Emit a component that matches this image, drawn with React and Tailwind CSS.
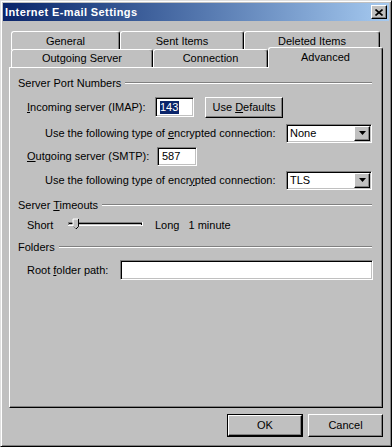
const raised = 'border border-t-white border-l-white border-r-black border-b-black shadow-[inset_-1px_-1px_#808080]'
const sunken = 'border border-t-[#808080] border-l-[#808080] border-r-white border-b-white shadow-[inset_1px_1px_#000,inset_-1px_-1px_#c0c0c0]'
const tab = 'flex items-center justify-center border-l border-t border-r border-l-white border-t-white border-r-black rounded-t-[3px] shadow-[inset_-1px_0_#808080]'

function GroupHeader({ children, className = '' }) {
  return (
    <div className={`flex items-center h-[14px] pl-[8px] pr-[10px] ${className}`}>
      <span className="leading-[13px] whitespace-nowrap">{children}</span>
      <div className="flex-1 ml-[4px] h-[2px] border-t border-t-[#808080] border-b border-b-white" />
    </div>
  )
}

function Select({ value }) {
  return (
    <div className={`ml-auto w-[86px] h-[19px] bg-white flex items-center ${sunken}`}>
      <span className="flex-1 pl-[3px] leading-[13px]">{value}</span>
      <div className={`w-[16px] h-[15px] mr-[1px] bg-[#c0c0c0] flex items-center justify-center ${raised}`}>
        <svg width="7" height="4" viewBox="0 0 7 4">
          <path d="M0 0h7L3.5 4z" fill="#000" />
        </svg>
      </div>
    </div>
  )
}

export default function App() {
  return (
    <div className="w-[392px] h-[447px] bg-[#c0c0c0] border border-t-[#dfdfdf] border-l-[#dfdfdf] border-r-black border-b-black shadow-[inset_1px_1px_#fff,inset_-1px_-1px_#808080] p-[2px] flex flex-col font-['Liberation_Sans',Arial,sans-serif] text-[11px] text-black select-none">
      {/* title bar */}
      <div className="h-[18px] flex items-center bg-gradient-to-r from-[#0a246a] to-[#a6caf0] pl-[2px] pr-[2px]">
        <span className="flex-1 text-white font-bold tracking-[0.4px] leading-[13px]">Internet E-mail Settings</span>
        <div className={`w-[16px] h-[14px] bg-[#c0c0c0] flex items-center justify-center ${raised}`}>
          <svg width="8" height="7" viewBox="0 0 8 7">
            <path d="M0.5 0.5l7 6M7.5 0.5l-7 6" stroke="#000" strokeWidth="1.6" />
          </svg>
        </div>
      </div>

      {/* tabs */}
      <div className="mt-[10px] ml-[8px] flex h-[18px]">
        <div className={`w-[109px] h-[19px] ${tab}`}>General</div>
        <div className={`w-[124px] h-[19px] ${tab}`}>Sent Items</div>
        <div className={`w-[136px] h-[19px] ${tab}`}>Deleted Items</div>
      </div>
      <div className="ml-[8px] flex items-end h-[18px]">
        <div className={`w-[142px] h-[18px] bg-[#c0c0c0] ${tab}`}>Outgoing Server</div>
        <div className={`w-[115px] h-[18px] bg-[#c0c0c0] ${tab}`}>Connection</div>
        <div className={`relative z-10 w-[115px] h-[21px] -mb-[1px] bg-[#c0c0c0] pb-[2px] ${tab}`}>Advanced</div>
      </div>

      {/* panel */}
      <div className="mx-[6px] h-[341px] flex flex-col border border-t-white border-l-white border-r-black border-b-black shadow-[inset_-1px_-1px_#808080]">
        <GroupHeader className="mt-[8px]">Server Port Numbers</GroupHeader>

        <div className="mt-[6px] h-[22px] flex items-center pl-[17px]">
          <span className="w-[128px] leading-[13px]"><span className="underline">I</span>ncoming server (IMAP):</span>
          <div className={`w-[39px] h-[20px] bg-white flex items-center pl-[4px] ${sunken}`}>
            <span className="bg-[#0a246a] text-white leading-[13px] pr-[1px]">143</span>
          </div>
          <div className={`ml-[11px] w-[78px] h-[21px] flex items-center justify-center ${raised}`}>
            <span className="leading-[13px]">Use <span className="underline">D</span>efaults</span>
          </div>
        </div>

        <div className="mt-[5px] h-[20px] flex items-center pl-[35px] pr-[10px]">
          <span className="leading-[13px]">Use the following type of <span className="underline">e</span>ncrypted connection:</span>
          <Select value="None" />
        </div>

        <div className="mt-[3px] h-[20px] flex items-center pl-[17px]">
          <span className="w-[130px] leading-[13px]"><span className="underline">O</span>utgoing server (SMTP):</span>
          <div className={`w-[40px] h-[19px] bg-white flex items-center pl-[4px] ${sunken}`}>
            <span className="leading-[13px]">587</span>
          </div>
        </div>

        <div className="mt-[4px] h-[20px] flex items-center pl-[35px] pr-[10px]">
          <span className="leading-[13px]">Use the following type of encr<span className="underline">y</span>pted connection:</span>
          <Select value="TLS" />
        </div>

        <GroupHeader className="mt-[8px]">Server <span className="underline">T</span>imeouts</GroupHeader>

        <div className="mt-[4px] h-[18px] flex items-center pl-[17px]">
          <span className="w-[41px] leading-[13px]">Short</span>
          <svg width="76" height="18" viewBox="0 0 76 18">
            <rect x="0" y="6" width="75" height="4" fill="#fff" />
            <rect x="0" y="6" width="74" height="3" fill="#808080" />
            <rect x="1" y="7" width="73" height="2" fill="#000" />
            <rect x="1" y="8" width="72" height="1" fill="#c0c0c0" />
            <path d="M5 3h6v7l-3 3l-3-3z" fill="#c0c0c0" />
            <path d="M5 10V3h5" stroke="#fff" fill="none" />
            <path d="M10.5 3v7.5l-2.5 2.5" stroke="#000" fill="none" />
            <path d="M5.5 10.5l2.5 2.5" stroke="#808080" fill="none" />
          </svg>
          <span className="ml-[11px] leading-[13px]">Long</span>
          <span className="ml-[9px] leading-[13px]">1 minute</span>
        </div>

        <GroupHeader className="mt-[6px]">Folders</GroupHeader>

        <div className="mt-[6px] h-[20px] flex items-center pl-[17px] pr-[9px]">
          <span className="w-[93px] leading-[13px]">Root <span className="underline">f</span>older path:</span>
          <div className={`flex-1 h-[20px] bg-white ${sunken}`} />
        </div>
      </div>

      {/* buttons */}
      <div className="mt-[6px] flex justify-end gap-[5px] pr-[6px]">
        <div className="w-[76px] h-[23px] border border-black">
          <div className={`w-full h-full flex items-center justify-center ${raised}`}>
            <span className="leading-[13px]">OK</span>
          </div>
        </div>
        <div className={`w-[75px] h-[23px] flex items-center justify-center ${raised}`}>
          <span className="leading-[13px]">Cancel</span>
        </div>
      </div>
    </div>
  )
}
